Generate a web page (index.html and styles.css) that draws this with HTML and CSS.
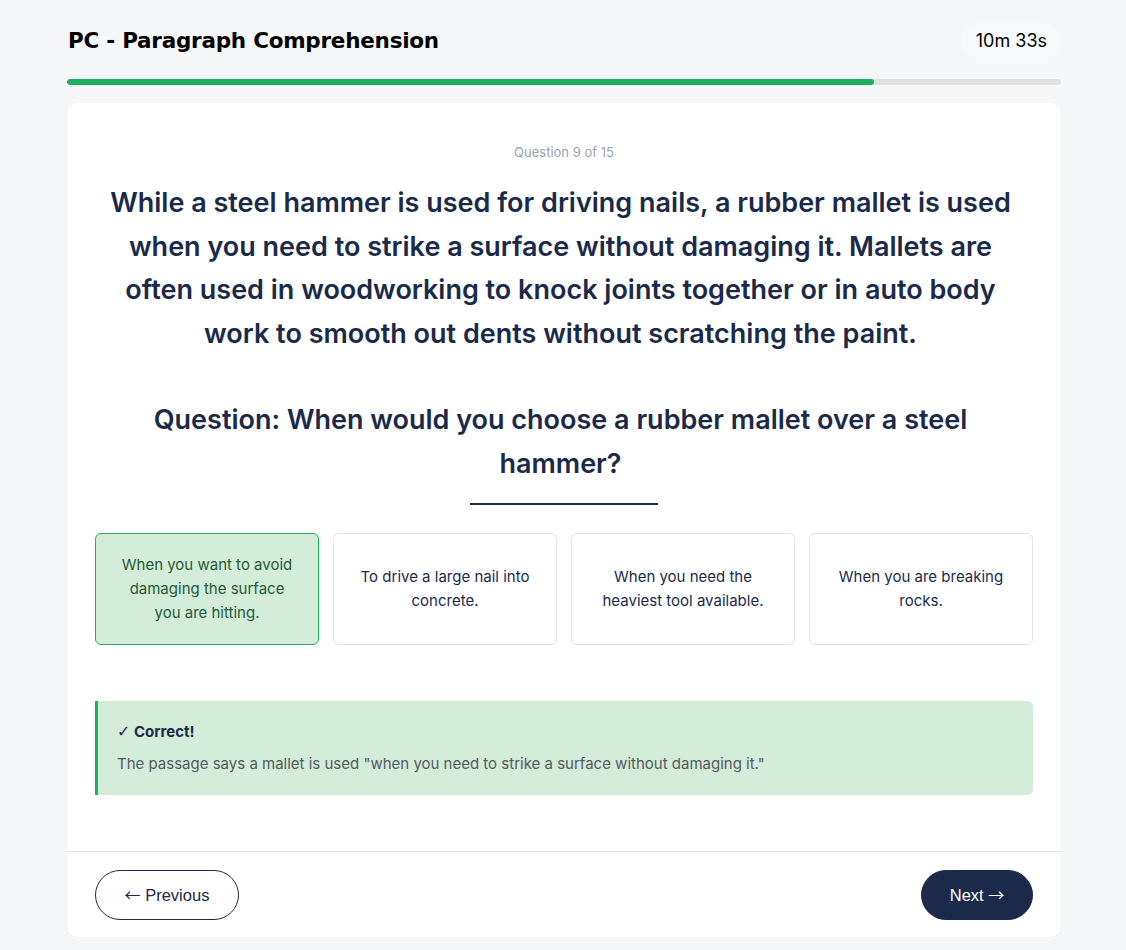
FILE: index.html
```html
<!DOCTYPE html>
<html lang="en">
<head>
<meta charset="utf-8">
<title>PC - Paragraph Comprehension</title>
<link rel="stylesheet" href="styles.css">
</head>
<body>
<div class="page">
  <header class="top">
    <h1 class="title">PC - Paragraph Comprehension</h1>
    <div class="timer">10m 33s</div>
  </header>
  <div class="progress"><div class="progress-fill" style="width:81.2%"></div></div>
  <main class="card">
    <div class="card-body">
      <div class="counter">Question 9 of 15</div>
      <p class="passage">While a steel hammer is used for driving nails, a rubber mallet is used when you need to strike a surface without damaging it. Mallets are often used in woodworking to knock joints together or in auto body work to smooth out dents without scratching the paint.</p>
      <p class="question">Question: When would you choose a rubber mallet over a steel hammer?</p>
      <div class="rule"></div>
      <div class="options">
        <button class="option selected">When you want to avoid damaging the surface you are hitting.</button>
        <button class="option">To drive a large nail into concrete.</button>
        <button class="option">When you need the heaviest tool available.</button>
        <button class="option">When you are breaking rocks.</button>
      </div>
      <div class="feedback">
        <div class="fb-title"><span class="check">✓</span> Correct!</div>
        <div class="fb-text">The passage says a mallet is used "when you need to strike a surface without damaging it."</div>
      </div>
    </div>
    <footer class="card-foot">
      <button class="btn btn-prev"><span class="arrow">←</span> Previous</button>
      <button class="btn btn-next">Next <span class="arrow">→</span></button>
    </footer>
  </main>
</div>
</body>
</html>
```
FILE: styles.css
```css
* { box-sizing: border-box; }
html, body { margin: 0; padding: 0; }
body {
  background: #f6f7f9;
  font-family: Inter, "Liberation Sans", sans-serif;
  color: #1b2a4a;
}
.page {
  width: 994px;
  margin-left: calc(50% - 496px);
  padding-top: 22px;
}
.top {
  display: flex;
  align-items: center;
  justify-content: space-between;
  height: 36px;
}
.title {
  margin: 0 0 0 1px;
  font-family: "DejaVu Sans", sans-serif;
  font-weight: 700;
  font-size: 21.5px;
  letter-spacing: -0.25px;
  color: #000;
}
.timer {
  font-family: Inter, sans-serif;
  font-size: 18px;
  color: #000;
  background: #f8f9fb;
  border-radius: 18px;
  padding: 7px 14px;
}
.progress {
  margin-top: 21px;
  height: 6px;
  border-radius: 3px;
  background: #e0e0e0;
  overflow: hidden;
}
.progress-fill {
  height: 100%;
  background: #1db060;
  border-radius: 3px;
}
.card {
  margin-top: 18px;
  background: #fff;
  border-radius: 10px;
  box-shadow: 0 1px 3px rgba(0,0,0,0.04);
}
.card-body {
  padding: 40px 28px 56px;
}
.counter {
  text-align: center;
  font-size: 13px;
  color: #9ca3af;
  line-height: 18px;
}
.passage {
  margin: 20px auto 0;
  max-width: 919px;
  padding-right: 7px;
  text-align: center;
  font-size: 27px;
  font-weight: 600;
  line-height: 43.5px;
}
.question {
  margin: 43px auto 0;
  max-width: 867px;
  padding-right: 7px;
  text-align: center;
  font-size: 27px;
  font-weight: 600;
  line-height: 43.5px;
}
.rule {
  width: 188px;
  height: 2px;
  background: #1b2a4a;
  margin: 18px auto 0;
}
.options {
  display: grid;
  grid-template-columns: repeat(4, 1fr);
  gap: 14px;
  margin-top: 28px;
}
.option {
  height: 112px;
  background: #fff;
  border: 1px solid #e3e3e3;
  border-radius: 6px;
  font-family: Inter, sans-serif;
  font-size: 15px;
  line-height: 24px;
  color: #1b2a4a;
  padding: 0 24px;
  text-align: center;
}
.option.selected {
  background: #d4ecda;
  border-color: #22b060;
  color: #1f5c33;
}
.feedback {
  margin-top: 56px;
  background: #d4ecda;
  border-left: 3px solid #1db060;
  border-radius: 0 6px 6px 0;
  padding: 21px 20px 21px 19px;
}
.fb-title {
  font-weight: 700;
  font-size: 15px;
  line-height: 20px;
  color: #1b2a4a;
}
.check {
  font-family: "DejaVu Sans", sans-serif;
  font-weight: 700;
  font-size: 16px;
}
.fb-text {
  margin-top: 12px;
  font-size: 15px;
  line-height: 20px;
  color: #555a60;
}
.card-foot {
  border-top: 1px solid #e3e4e6;
  display: flex;
  justify-content: space-between;
  align-items: center;
  padding: 18px 28px 17px;
}
.btn {
  height: 50px;
  border-radius: 25px;
  font-family: "Liberation Sans", Arial, sans-serif;
  font-size: 16.5px;
  line-height: 18px;
  padding: 0;
  cursor: pointer;
}
.arrow {
  font-family: "Noto Sans CJK JP", sans-serif;
  font-size: 16px;
  line-height: 1;
}
.btn-prev {
  background: #fff;
  border: 1px solid #1b2a4a;
  color: #1b2a4a;
  width: 144px;
}
.btn-next {
  background: #1b2a4a;
  border: 1px solid #1b2a4a;
  color: #fff;
  width: 112px;
}
```
